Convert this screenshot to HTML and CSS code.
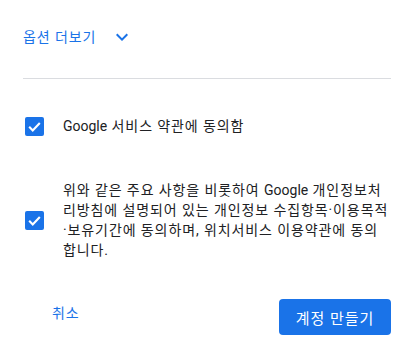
FILE: index.html
```html
<!DOCTYPE html>
<html lang="ko">
<head>
    <meta charset="UTF-8">
    <meta name="viewport" content="width=device-width, initial-scale=1.0">
    <title>계정 만들기</title>
    <link rel="stylesheet" href="styles.css">
</head>
<body>
    <div class="page">
        <div class="more">
            <span class="more-label">옵션 더보기</span>
            <svg class="chevron" viewBox="0 0 24 24" width="24" height="24">
                <path d="M7.41 8.59L12 13.17l4.59-4.58L18 10l-6 6-6-6 1.41-1.41z"/>
            </svg>
        </div>
        <hr class="divider">
        <label class="agree first">
            <span class="box">
                <svg viewBox="0 0 24 24" width="17" height="17"><path d="M4.5 12.5l5 5L19.5 7" fill="none" stroke="#fff" stroke-width="3"/></svg>
            </span>
            <span class="agree-text"><span class="latin">Google</span> 서비스 약관에 동의함</span>
        </label>
        <label class="agree second">
            <span class="box">
                <svg viewBox="0 0 24 24" width="17" height="17"><path d="M4.5 12.5l5 5L19.5 7" fill="none" stroke="#fff" stroke-width="3"/></svg>
            </span>
            <span class="agree-text">위와 같은 주요 사항을 비롯하여 <span class="latin">Google</span> 개인정보처리방침에 설명되어 있는 개인정보 수집항목·이용목적·보유기간에 동의하며, 위치서비스 이용약관에 동의합니다.</span>
        </label>
        <div class="actions">
            <button class="cancel" type="button">취소</button>
            <button class="create" type="button">계정 만들기</button>
        </div>
    </div>
</body>
</html>
```

FILE: styles.css
```css
body {
    margin: 0;
    background: #fff;
    font-family: Roboto, "Noto Sans CJK KR", sans-serif;
    color: #202124;
}
.page {
    width: 368px;
    padding: 0 19px 0 23px;
}
.latin {
    letter-spacing: 0;
}
.more {
    display: flex;
    align-items: center;
    height: 24px;
    margin-top: 25px;
}
.more-label {
    font-size: 14px;
    line-height: 20px;
    letter-spacing: 0.9px;
    color: #1a73e8;
}
.chevron {
    fill: #1a73e8;
    margin-left: 14px;
}
.divider {
    border: 0;
    border-top: 1px solid #dadce0;
    margin: 29px 0 0;
}
.agree {
    display: flex;
    align-items: center;
    font-size: 14px;
    line-height: 20px;
}
.agree.first {
    margin-top: 37px;
}
.agree.second {
    margin-top: 44px;
}
.box {
    flex: none;
    width: 19px;
    height: 19px;
    margin-left: 2px;
    margin-right: 19px;
    border-radius: 2px;
    background: #1a73e8;
    display: flex;
    align-items: center;
    justify-content: center;
}
.agree-text {
    flex: 1;
    max-width: 327px;
    letter-spacing: 0.9px;
}
.actions {
    display: flex;
    justify-content: space-between;
    align-items: center;
    margin-top: 39px;
}
.cancel {
    border: 0;
    background: none;
    padding: 0;
    margin: 0 0 8px 29px;
    font-family: inherit;
    font-size: 14px;
    line-height: 20px;
    letter-spacing: 0.9px;
    color: #1a73e8;
}
.create {
    border: 0;
    border-radius: 4px;
    background: #1a73e8;
    color: #fff;
    height: 36px;
    width: 112px;
    padding: 0;
    font-family: inherit;
    font-size: 15px;
    letter-spacing: 1px;
}
```
